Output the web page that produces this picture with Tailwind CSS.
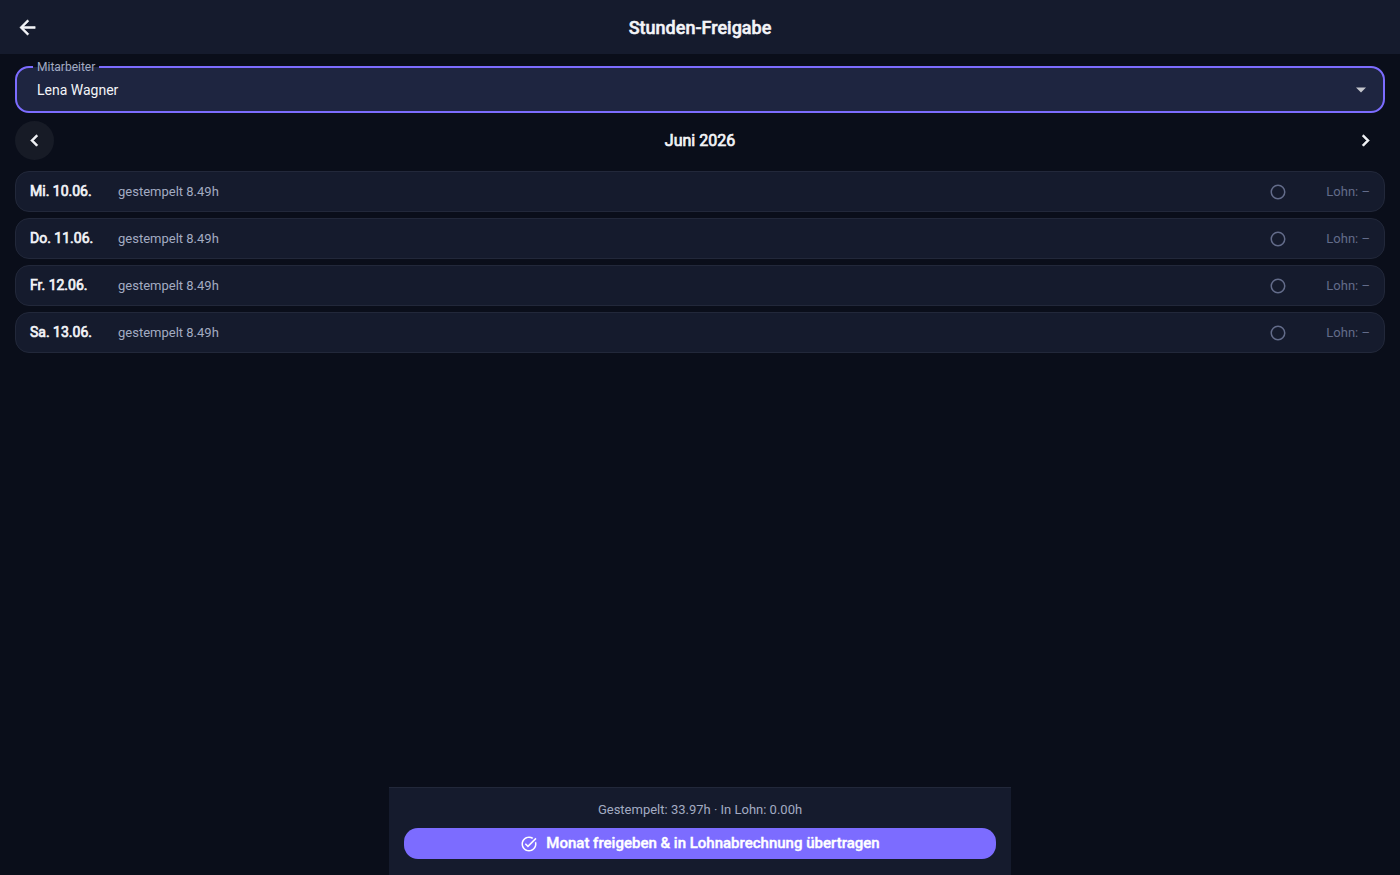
<!DOCTYPE html>
<html lang="de">
<head>
  <meta charset="UTF-8">
  <meta name="viewport" content="width=device-width, initial-scale=1.0">
  <title>Stunden-Freigabe</title>
  <script src="https://cdn.jsdelivr.net/npm/@tailwindcss/browser@4"></script>
</head>
<body class="flex min-h-screen flex-col bg-[#0a0e1a] font-['Roboto',sans-serif] text-[#f3f4f8]">

  <!-- App bar -->
  <header class="grid h-[54px] grid-cols-[40px_1fr_40px] items-center bg-[#151b2d] px-[7px]">
    <button type="button" aria-label="Zurück" class="flex size-10 items-center justify-center rounded-full">
      <svg class="size-[23px]" viewBox="0 0 24 24" fill="currentColor" stroke="currentColor" stroke-width=".6"><path d="M20 11H7.83l5.59-5.59L12 4l-8 8 8 8 1.41-1.41L7.83 13H20v-2z"/></svg>
    </button>
    <h1 class="pt-[2px] text-center text-[18px] leading-6 font-medium [-webkit-text-stroke:0.5px_currentColor]">Stunden-Freigabe</h1>
  </header>

  <main class="flex grow flex-col px-[15px] pt-3">

    <!-- Employee select -->
    <div class="relative">
      <label for="mitarbeiter" class="absolute -top-[6px] left-[18px] bg-linear-to-b from-[#0a0e1a] from-50% to-[#1e2540] to-50% px-1 text-[12px] leading-[14px] text-[#a3abc2]">Mitarbeiter</label>
      <select id="mitarbeiter" class="block h-[47px] w-full appearance-none rounded-[14px] border-2 border-[#7c6cff] bg-[#1e2540] px-5 pt-[2px] text-[14px] text-[#f3f4f8] focus:outline-none">
        <option>Lena Wagner</option>
      </select>
      <svg class="pointer-events-none absolute top-3 right-3 size-6 text-[#c4c6cc]" viewBox="0 0 24 24" fill="currentColor"><path d="M7 9.5l5 5 5-5z"/></svg>
    </div>

    <!-- Month navigation -->
    <div class="mt-2 flex items-center justify-between">
      <button type="button" aria-label="Vorheriger Monat" class="flex size-[39px] items-center justify-center rounded-full bg-[#171b26]">
        <svg class="size-[23px]" viewBox="0 0 24 24" fill="currentColor" stroke="currentColor" stroke-width=".7"><path d="M15.41 7.41L14 6l-6 6 6 6 1.41-1.41L10.83 12z"/></svg>
      </button>
      <h2 class="text-[16px] leading-5 font-normal [-webkit-text-stroke:0.7px_currentColor]">Juni 2026</h2>
      <button type="button" aria-label="Nächster Monat" class="flex size-[39px] items-center justify-center rounded-full">
        <svg class="size-[23px]" viewBox="0 0 24 24" fill="currentColor" stroke="currentColor" stroke-width=".7"><path d="M10 6L8.59 7.41 13.17 12l-4.58 4.59L10 18l6-6z"/></svg>
      </button>
    </div>

    <!-- Days -->
    <ul class="mt-[11px] flex flex-col gap-[6px]">
      <li class="flex h-[41px] items-center rounded-[14px] border border-[#22283a] bg-[#151b2d] px-[14px] text-[13px]">
        <span class="w-[88px] text-[14px] [-webkit-text-stroke:0.7px_currentColor]">Mi. 10.06.</span>
        <span class="grow text-[#a3abc2]">gestempelt 8.49h</span>
        <svg class="size-[18px] text-[#636c8a]" viewBox="0 0 24 24" fill="currentColor"><path d="M12 2a10 10 0 1 0 0 20 10 10 0 0 0 0-20zm0 18a8 8 0 1 1 0-16 8 8 0 0 1 0 16z"/></svg>
        <span class="w-[83px] text-right text-[#636c8a]">Lohn: –</span>
      </li>
      <li class="flex h-[41px] items-center rounded-[14px] border border-[#22283a] bg-[#151b2d] px-[14px] text-[13px]">
        <span class="w-[88px] text-[14px] [-webkit-text-stroke:0.7px_currentColor]">Do. 11.06.</span>
        <span class="grow text-[#a3abc2]">gestempelt 8.49h</span>
        <svg class="size-[18px] text-[#636c8a]" viewBox="0 0 24 24" fill="currentColor"><path d="M12 2a10 10 0 1 0 0 20 10 10 0 0 0 0-20zm0 18a8 8 0 1 1 0-16 8 8 0 0 1 0 16z"/></svg>
        <span class="w-[83px] text-right text-[#636c8a]">Lohn: –</span>
      </li>
      <li class="flex h-[41px] items-center rounded-[14px] border border-[#22283a] bg-[#151b2d] px-[14px] text-[13px]">
        <span class="w-[88px] text-[14px] [-webkit-text-stroke:0.7px_currentColor]">Fr. 12.06.</span>
        <span class="grow text-[#a3abc2]">gestempelt 8.49h</span>
        <svg class="size-[18px] text-[#636c8a]" viewBox="0 0 24 24" fill="currentColor"><path d="M12 2a10 10 0 1 0 0 20 10 10 0 0 0 0-20zm0 18a8 8 0 1 1 0-16 8 8 0 0 1 0 16z"/></svg>
        <span class="w-[83px] text-right text-[#636c8a]">Lohn: –</span>
      </li>
      <li class="flex h-[41px] items-center rounded-[14px] border border-[#22283a] bg-[#151b2d] px-[14px] text-[13px]">
        <span class="w-[88px] text-[14px] [-webkit-text-stroke:0.7px_currentColor]">Sa. 13.06.</span>
        <span class="grow text-[#a3abc2]">gestempelt 8.49h</span>
        <svg class="size-[18px] text-[#636c8a]" viewBox="0 0 24 24" fill="currentColor"><path d="M12 2a10 10 0 1 0 0 20 10 10 0 0 0 0-20zm0 18a8 8 0 1 1 0-16 8 8 0 0 1 0 16z"/></svg>
        <span class="w-[83px] text-right text-[#636c8a]">Lohn: –</span>
      </li>
    </ul>
  </main>

  <!-- Totals and approval -->
  <footer class="mx-auto w-full max-w-[622px] border-t border-[#22283a] bg-[#151b2d] px-[15px] pt-3 pb-4 text-center">
    <p class="text-[13px] leading-5 text-[#a3abc2]">Gestempelt: 33.97h · In Lohn: 0.00h</p>
    <button type="button" class="mt-2 flex h-[31px] w-full items-center justify-center gap-2 rounded-[14px] bg-[#7c6cff] text-[15px] font-medium text-white">
      <svg class="size-[18px]" viewBox="0 0 24 24" fill="currentColor"><path d="M22 5.18L10.59 16.6l-4.24-4.24 1.41-1.41 2.83 2.83 10-10L22 5.18zm-2.21 5.04c.13.57.21 1.17.21 1.78 0 4.42-3.58 8-8 8s-8-3.58-8-8 3.58-8 8-8c1.58 0 3.04.46 4.28 1.25l1.44-1.44A9.9 9.9 0 0 0 12 2C6.48 2 2 6.48 2 12s4.48 10 10 10 10-4.48 10-10c0-1.19-.22-2.33-.6-3.39l-1.61 1.61z"/></svg>
      <span class="[-webkit-text-stroke:0.4px_currentColor]">Monat freigeben &amp; in Lohnabrechnung übertragen</span>
    </button>
  </footer>

</body>
</html>
